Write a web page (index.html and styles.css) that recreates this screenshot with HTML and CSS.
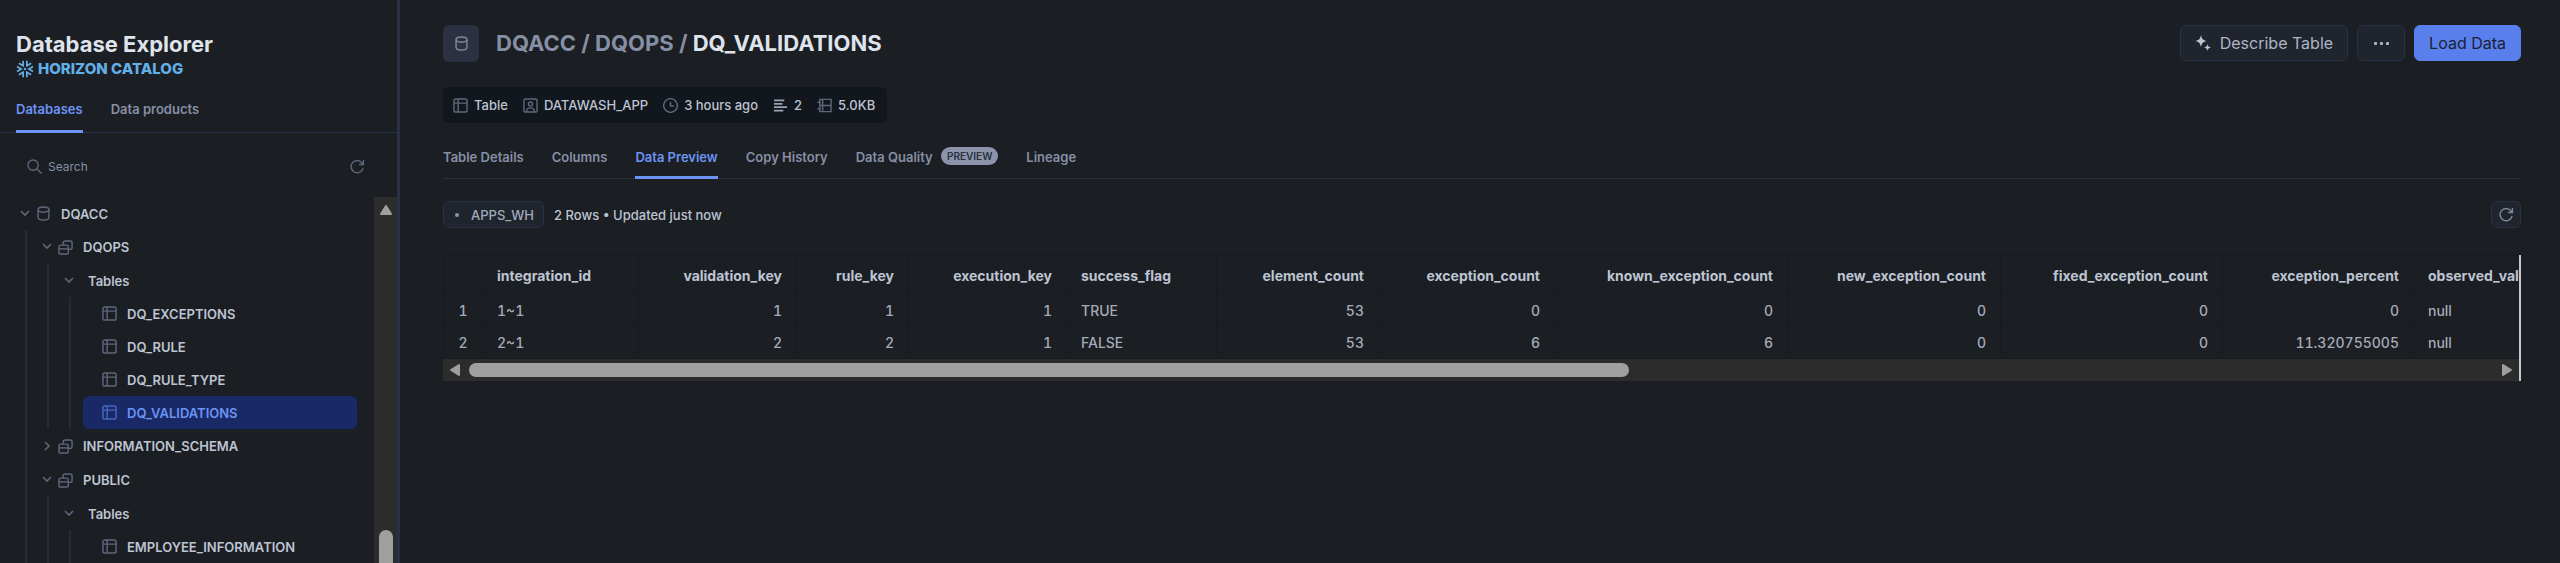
FILE: index.html
```html
<!DOCTYPE html>
<html lang="en">
<head>
    <meta charset="UTF-8">
    <meta name="viewport" content="width=device-width, initial-scale=1.0">
    <title>DQ_VALIDATIONS - Database Explorer</title>
    <link rel="stylesheet" href="styles.css">
</head>
<body>
    <svg class="sprite" aria-hidden="true">
        <symbol id="i-down" viewBox="0 0 16 16"><path d="M4 5l4 4 4-4"/></symbol>
        <symbol id="i-right" viewBox="0 0 16 16"><path d="M6 4l4 4-4 4"/></symbol>
        <symbol id="i-database" viewBox="0 0 16 16">
            <ellipse cx="8" cy="3.8" rx="5.8" ry="2.8"/>
            <path d="M2.2 4v8c0 1.700 2.500 3 5.800 3s5.800-1.300 5.800-3V4"/>
        </symbol>
        <symbol id="i-schema" viewBox="0 0 16 16">
            <path d="M5.5 5.5V3a2 2 0 0 1 2-2H13a2 2 0 0 1 2 2v5a2 2 0 0 1-2 2h-2"/>
            <rect x="1" y="5.5" width="10" height="9.5" rx="2"/>
            <path d="M1 9.5h10"/>
        </symbol>
        <symbol id="i-table" viewBox="0 0 16 16">
            <rect x="1" y="1" width="14" height="14" rx="2"/>
            <path d="M1 5.5h14M5.5 1v14"/>
        </symbol>
        <symbol id="i-user" viewBox="0 0 16 16">
            <rect x="1" y="1" width="14" height="14" rx="2"/>
            <circle cx="8" cy="6.5" r="2.2"/>
            <path d="M4 15v-1.500c0-2 1.500-3 4-3s4 1 4 3V15"/>
        </symbol>
        <symbol id="i-clock" viewBox="0 0 16 16">
            <circle cx="8" cy="8" r="7.3"/>
            <path d="M8 4v4.500h3.500"/>
        </symbol>
        <symbol id="i-rows" viewBox="0 0 16 16">
            <path d="M1 2.500h11M1 6.200h9M1 9.800h14M1 13.500h10" stroke-width="1.8"/>
        </symbol>
        <symbol id="i-size" viewBox="0 0 16 16">
            <path d="M15 1.500H3v13h12zM6 1.500v13M3 8h12M.5 4.500H4M.5 11.500H4"/>
        </symbol>
        <symbol id="i-refresh" viewBox="0 0 16 16">
            <path d="M14 9.500a6.500 6.500 0 1 1-1.300-5.500L14 5.500M14.300 1v4.800H9.800"/>
        </symbol>
        <symbol id="i-search" viewBox="0 0 16 16">
            <circle cx="6.5" cy="6.5" r="5.5"/>
            <path d="M10.500 10.500l5 5"/>
        </symbol>
        <symbol id="i-sparkle" viewBox="0 0 16 16">
            <path class="solid" d="M6 0c.8 4 2 5.200 6 6-4 .8-5.200 2-6 6-.8-4-2-5.200-6-6 4-.8 5.200-2 6-6zM12.500 9c.5 2.400 1.100 3 3.500 3.500-2.400.5-3 1.100-3.500 3.500-.5-2.400-1.100-3-3.500-3.500 2.400-.5 3-1.100 3.500-3.500z"/>
        </symbol>
        <symbol id="i-snowflake" viewBox="0 0 18 18">
            <path id="flake-arm" d="M1 6.500L5.200 9 1 11.500"/>
            <use href="#flake-arm" transform="rotate(60 9 9)"/>
            <use href="#flake-arm" transform="rotate(120 9 9)"/>
            <use href="#flake-arm" transform="rotate(180 9 9)"/>
            <use href="#flake-arm" transform="rotate(240 9 9)"/>
            <use href="#flake-arm" transform="rotate(300 9 9)"/>
            <circle class="solid" cx="9" cy="9" r="1.2"/>
        </symbol>
    </svg>

    <div class="app">
        <aside class="sidebar">
            <header class="sidebar-header">
                <h1>Database Explorer</h1>
                <p class="catalog">
                    <svg class="flake"><use href="#i-snowflake"/></svg>
                    HORIZON CATALOG
                </p>
            </header>

            <nav class="tabs sidebar-tabs">
                <a href="#databases" class="tab active">Databases</a>
                <a href="#products" class="tab">Data products</a>
            </nav>

            <div class="search-row">
                <label class="search">
                    <svg class="icon"><use href="#i-search"/></svg>
                    <input type="text" placeholder="Search" aria-label="Search">
                </label>
                <button class="icon-btn" title="Refresh"><svg class="icon"><use href="#i-refresh"/></svg></button>
            </div>

            <div class="tree-pane">
                <ul class="tree">
                    <li>
                        <div class="node"><svg class="chevron"><use href="#i-down"/></svg><svg class="icon"><use href="#i-database"/></svg><span>DQACC</span></div>
                        <ul>
                            <li>
                                <div class="node schema"><svg class="chevron"><use href="#i-down"/></svg><svg class="icon"><use href="#i-schema"/></svg><span>DQOPS</span></div>
                                <ul>
                                    <li>
                                        <div class="node"><svg class="chevron"><use href="#i-down"/></svg><span>Tables</span></div>
                                        <ul>
                                            <li><a href="#" class="node leaf"><svg class="icon"><use href="#i-table"/></svg><span>DQ_EXCEPTIONS</span></a></li>
                                            <li><a href="#" class="node leaf"><svg class="icon"><use href="#i-table"/></svg><span>DQ_RULE</span></a></li>
                                            <li><a href="#" class="node leaf"><svg class="icon"><use href="#i-table"/></svg><span>DQ_RULE_TYPE</span></a></li>
                                            <li><a href="#" class="node leaf selected"><svg class="icon"><use href="#i-table"/></svg><span>DQ_VALIDATIONS</span></a></li>
                                        </ul>
                                    </li>
                                </ul>
                            </li>
                            <li>
                                <div class="node schema"><svg class="chevron"><use href="#i-right"/></svg><svg class="icon"><use href="#i-schema"/></svg><span>INFORMATION_SCHEMA</span></div>
                            </li>
                            <li>
                                <div class="node schema"><svg class="chevron"><use href="#i-down"/></svg><svg class="icon"><use href="#i-schema"/></svg><span>PUBLIC</span></div>
                                <ul>
                                    <li>
                                        <div class="node"><svg class="chevron"><use href="#i-down"/></svg><span>Tables</span></div>
                                        <ul>
                                            <li><a href="#" class="node leaf"><svg class="icon"><use href="#i-table"/></svg><span>EMPLOYEE_INFORMATION</span></a></li>
                                        </ul>
                                    </li>
                                </ul>
                            </li>
                        </ul>
                    </li>
                </ul>
                <div class="scrollbar vertical">
                    <svg class="arrow" viewBox="0 0 14 12"><path d="M7 2l5 8H2z"/></svg>
                    <div class="thumb"></div>
                </div>
            </div>
        </aside>

        <main class="main">
            <header class="page-header">
                <div class="object-icon"><svg class="icon"><use href="#i-database"/></svg></div>
                <h2 class="breadcrumb"><a href="#">DQACC</a> / <a href="#">DQOPS</a> / <strong>DQ_VALIDATIONS</strong></h2>
                <div class="actions">
                    <button class="btn"><svg class="icon"><use href="#i-sparkle"/></svg>Describe Table</button>
                    <button class="btn more" aria-label="More"><i></i><i></i><i></i></button>
                    <button class="btn btn-primary">Load Data</button>
                </div>
            </header>

            <div class="info-bar">
                <span><svg class="icon"><use href="#i-table"/></svg>Table</span>
                <span><svg class="icon"><use href="#i-user"/></svg>DATAWASH_APP</span>
                <span><svg class="icon"><use href="#i-clock"/></svg>3 hours ago</span>
                <span><svg class="icon light"><use href="#i-rows"/></svg>2</span>
                <span><svg class="icon"><use href="#i-size"/></svg>5.0KB</span>
            </div>

            <nav class="tabs main-tabs">
                <a href="#details" class="tab">Table Details</a>
                <a href="#columns" class="tab">Columns</a>
                <a href="#preview" class="tab active">Data Preview</a>
                <a href="#history" class="tab">Copy History</a>
                <a href="#quality" class="tab">Data Quality <span class="badge">PREVIEW</span></a>
                <a href="#lineage" class="tab">Lineage</a>
            </nav>

            <div class="toolbar">
                <button class="warehouse"><i></i>APPS_WH</button>
                <span class="status">2 Rows • Updated just now</span>
                <button class="refresh" title="Refresh"><svg class="icon"><use href="#i-refresh"/></svg></button>
            </div>

            <div class="grid">
                <div class="grid-scroll">
                    <table>
                        <colgroup>
                            <col class="c-index"><col class="c-id"><col class="c-key"><col class="c-rule">
                            <col class="c-key"><col class="c-flag"><col class="c-element"><col class="c-exception">
                            <col class="c-known"><col class="c-new"><col class="c-fixed"><col class="c-percent"><col class="c-observed">
                        </colgroup>
                        <thead>
                            <tr>
                                <th></th>
                                <th>integration_id</th>
                                <th class="num">validation_key</th>
                                <th class="num">rule_key</th>
                                <th class="num">execution_key</th>
                                <th>success_flag</th>
                                <th class="num">element_count</th>
                                <th class="num">exception_count</th>
                                <th class="num">known_exception_count</th>
                                <th class="num">new_exception_count</th>
                                <th class="num">fixed_exception_count</th>
                                <th class="num">exception_percent</th>
                                <th>observed_value</th>
                            </tr>
                        </thead>
                        <tbody>
                            <tr>
                                <td class="index">1</td>
                                <td>1~1</td>
                                <td class="num">1</td>
                                <td class="num">1</td>
                                <td class="num">1</td>
                                <td>TRUE</td>
                                <td class="num">53</td>
                                <td class="num">0</td>
                                <td class="num">0</td>
                                <td class="num">0</td>
                                <td class="num">0</td>
                                <td class="num">0</td>
                                <td>null</td>
                            </tr>
                            <tr>
                                <td class="index">2</td>
                                <td>2~1</td>
                                <td class="num">2</td>
                                <td class="num">2</td>
                                <td class="num">1</td>
                                <td>FALSE</td>
                                <td class="num">53</td>
                                <td class="num">6</td>
                                <td class="num">6</td>
                                <td class="num">0</td>
                                <td class="num">0</td>
                                <td class="num">11.320755005</td>
                                <td>null</td>
                            </tr>
                        </tbody>
                    </table>
                </div>
                <div class="scrollbar horizontal">
                    <svg class="arrow" viewBox="0 0 12 14"><path d="M2 7l8-5v10z"/></svg>
                    <div class="track"><div class="thumb"></div></div>
                    <svg class="arrow" viewBox="0 0 12 14"><path d="M10 7L2 2v10z"/></svg>
                </div>
            </div>
        </main>
    </div>
</body>
</html>
```
FILE: styles.css
```css
* {
    margin: 0;
    padding: 0;
    box-sizing: border-box;
}

:root {
    --background: #1b1e23;
    --surface: #20242d;
    --border: #2a3046;
    --text: #bdc4d2;
    --text-strong: #dfe3ec;
    --text-muted: #868fa5;
    --icon: #5f677b;
    --primary: #6c93f5;
    --track: #2c2c2c;
    --thumb: #9f9f9f;
}

body {
    font-family: Inter, "Liberation Sans", sans-serif;
    font-size: 13px;
    line-height: 20px;
    background: var(--background);
    color: var(--text);
}

a {
    color: inherit;
    text-decoration: none;
}

button,
input {
    font: inherit;
    color: inherit;
    background: none;
    border: none;
}

button {
    cursor: pointer;
}

ul {
    list-style: none;
}

.sprite {
    display: none;
}

.icon {
    width: 15px;
    height: 15px;
    flex: none;
    fill: none;
    stroke: currentColor;
    stroke-width: 1.5;
    color: var(--icon);
}

.icon.light {
    color: #9aa2b4;
}

.solid {
    fill: currentColor;
    stroke: none;
}

.app {
    display: flex;
    height: 100vh;
    overflow: hidden;
}

/* Sidebar */
.sidebar {
    width: 400px;
    flex: none;
    display: flex;
    flex-direction: column;
    border-right: 3px solid var(--border);
}

.sidebar-header {
    padding: 30px 16px 0;
}

.sidebar-header h1 {
    font-size: 22px;
    line-height: 28px;
    font-weight: 700;
    color: var(--text-strong);
}

.catalog {
    display: flex;
    align-items: center;
    gap: 4px;
    margin-top: 1px;
    font-size: 15px;
    font-weight: 800;
    color: #62b0e6;
}

.flake {
    width: 18px;
    height: 18px;
    fill: none;
    stroke: currentColor;
    stroke-width: 1.7;
}

.tabs {
    display: flex;
    gap: 28px;
    border-bottom: 1px solid var(--border);
}

.tab {
    font-weight: 600;
    color: var(--text-muted);
    margin-bottom: -1px;
    border-bottom: 3px solid transparent;
}

.tab.active {
    color: var(--primary);
    border-color: var(--primary);
}

.sidebar-tabs {
    padding: 20px 16px 0;
}

.sidebar-tabs .tab {
    padding-bottom: 11px;
}

.search-row {
    display: flex;
    align-items: center;
    justify-content: space-between;
    height: 61px;
    margin-top: 3px;
    padding: 0 32px 0 27px;
}

.search {
    display: flex;
    align-items: center;
    gap: 6px;
}

.search input {
    width: 240px;
    font-size: 12px;
    outline: none;
}

.search input::placeholder {
    color: var(--text-muted);
    opacity: 1;
}

.icon-btn {
    display: flex;
}

.tree-pane {
    display: flex;
    flex: 1;
    min-height: 0;
}

.tree {
    flex: 1;
    padding: 0 17px;
    overflow: hidden;
}

.tree ul {
    margin-left: 8px;
    padding-left: 12px;
    border-left: 2px solid #262b3c;
}

.node {
    display: flex;
    align-items: center;
    height: 33px;
    font-weight: 600;
}

.node.schema {
    height: 34px;
}

.chevron {
    width: 16px;
    height: 16px;
    margin-right: 3px;
    fill: none;
    stroke: var(--icon);
    stroke-width: 1.6;
}

.chevron + span {
    margin-left: 8px;
}

.node .icon {
    margin-right: 10px;
}

.leaf {
    padding-left: 19px;
    border-radius: 6px;
}

.leaf.selected {
    background: #192965;
    color: var(--primary);
}

.leaf.selected .icon {
    color: #4668c0;
}

/* Scrollbars */
.scrollbar {
    display: flex;
    background: var(--track);
}

.scrollbar .arrow {
    flex: none;
    fill: var(--thumb);
    stroke: var(--thumb);
    stroke-width: 2;
    stroke-linejoin: round;
}

.scrollbar .thumb {
    background: var(--thumb);
    border-radius: 7px;
}

.scrollbar.vertical {
    flex-direction: column;
    align-items: center;
    justify-content: space-between;
    width: 23px;
    padding-top: 7px;
}

.vertical .arrow {
    width: 14px;
    height: 12px;
}

.vertical .thumb {
    width: 14px;
    height: 33px;
    border-radius: 7px 7px 0 0;
}

.scrollbar.horizontal {
    align-items: center;
    gap: 8px;
    height: 22px;
    padding: 0 6px;
}

.horizontal .arrow {
    width: 12px;
    height: 14px;
}

.horizontal .track {
    flex: 1;
}

.horizontal .thumb {
    width: 57.3%;
    height: 14px;
}

/* Main panel */
.main {
    flex: 1;
    min-width: 0;
    padding: 25px 39px 0 43px;
}

.page-header {
    display: flex;
    align-items: flex-start;
}

.object-icon {
    display: flex;
    align-items: center;
    justify-content: center;
    width: 36px;
    height: 37px;
    border-radius: 6px;
    background: #2b3042;
}

.object-icon .icon {
    color: #80889b;
}

.breadcrumb {
    margin-left: 17px;
    font-size: 22px;
    line-height: 37px;
    font-weight: 700;
    color: var(--text-muted);
}

.breadcrumb strong {
    font-weight: 700;
    color: var(--text-strong);
}

.actions {
    display: flex;
    gap: 9px;
    margin-left: auto;
}

.btn {
    display: flex;
    align-items: center;
    justify-content: center;
    gap: 9px;
    height: 36px;
    padding: 0 14px;
    font-size: 16px;
    color: #adb4c4;
    background: var(--surface);
    border: 1px solid var(--border);
    border-radius: 6px;
}

.btn .icon {
    width: 16px;
    height: 16px;
    color: #bdc4d2;
}

.btn.more {
    gap: 3px;
    width: 48px;
}

.more i {
    width: 3px;
    height: 3px;
    border-radius: 1px;
    background: #adb4c4;
}

.btn-primary {
    color: #1b2233;
    background: #597fec;
    border-color: #597fec;
}

.info-bar {
    display: flex;
    gap: 15px;
    width: fit-content;
    margin-top: 25px;
    padding: 8px 12px 8px 10px;
    border-radius: 6px;
    font-weight: 500;
    background: #12161d;
}

.info-bar span {
    display: flex;
    align-items: center;
    gap: 6px;
}

.main-tabs {
    margin-top: 24px;
}

.main-tabs .tab {
    padding-bottom: 9px;
}

.badge {
    display: inline-block;
    margin-left: 5px;
    padding: 0 6px;
    font-size: 10px;
    line-height: 18px;
    border-radius: 9px;
    color: #2a303e;
    background: #8b94aa;
    vertical-align: top;
}

.toolbar {
    display: flex;
    align-items: center;
    gap: 10px;
    margin: 22px 0 27px;
    font-weight: 500;
}

.warehouse,
.refresh {
    display: flex;
    align-items: center;
    height: 27px;
    border: 1px solid var(--border);
    border-radius: 6px;
    background: var(--surface);
}

.warehouse {
    gap: 12px;
    padding: 0 9px 0 11px;
    color: #a3abbf;
}

.warehouse i {
    width: 4px;
    height: 4px;
    border-radius: 50%;
    background: #8b94aa;
}

.refresh {
    justify-content: center;
    width: 30px;
    margin-left: auto;
}

.refresh .icon {
    color: #80889b;
}

/* Data grid */
.grid {
    border-right: 2px solid #c3c7d1;
}

.grid-scroll {
    overflow: hidden;
}

.grid table {
    width: 2120px;
    table-layout: fixed;
    border-collapse: collapse;
    font-size: 14px;
}

.grid th,
.grid td {
    height: 32px;
    padding: 0 14px;
    text-align: left;
    white-space: nowrap;
    border: 1px solid #181a1f;
}

.grid th {
    height: 39px;
    padding-top: 2px;
    font-weight: 700;
}

.grid td {
    font-weight: 500;
    color: #a5abb9;
    font-variant-numeric: tabular-nums;
}

.grid .num {
    text-align: right;
}

.grid .index {
    padding: 0;
    text-align: center;
}

.c-index { width: 39px; }
.c-id { width: 156px; }
.c-key { width: 158px; }
.c-rule { width: 112px; }
.c-flag { width: 150px; }
.c-element { width: 162px; }
.c-exception { width: 176px; }
.c-known { width: 233px; }
.c-new { width: 213px; }
.c-fixed { width: 222px; }
.c-percent { width: 191px; }
.c-observed { width: 150px; }
```
